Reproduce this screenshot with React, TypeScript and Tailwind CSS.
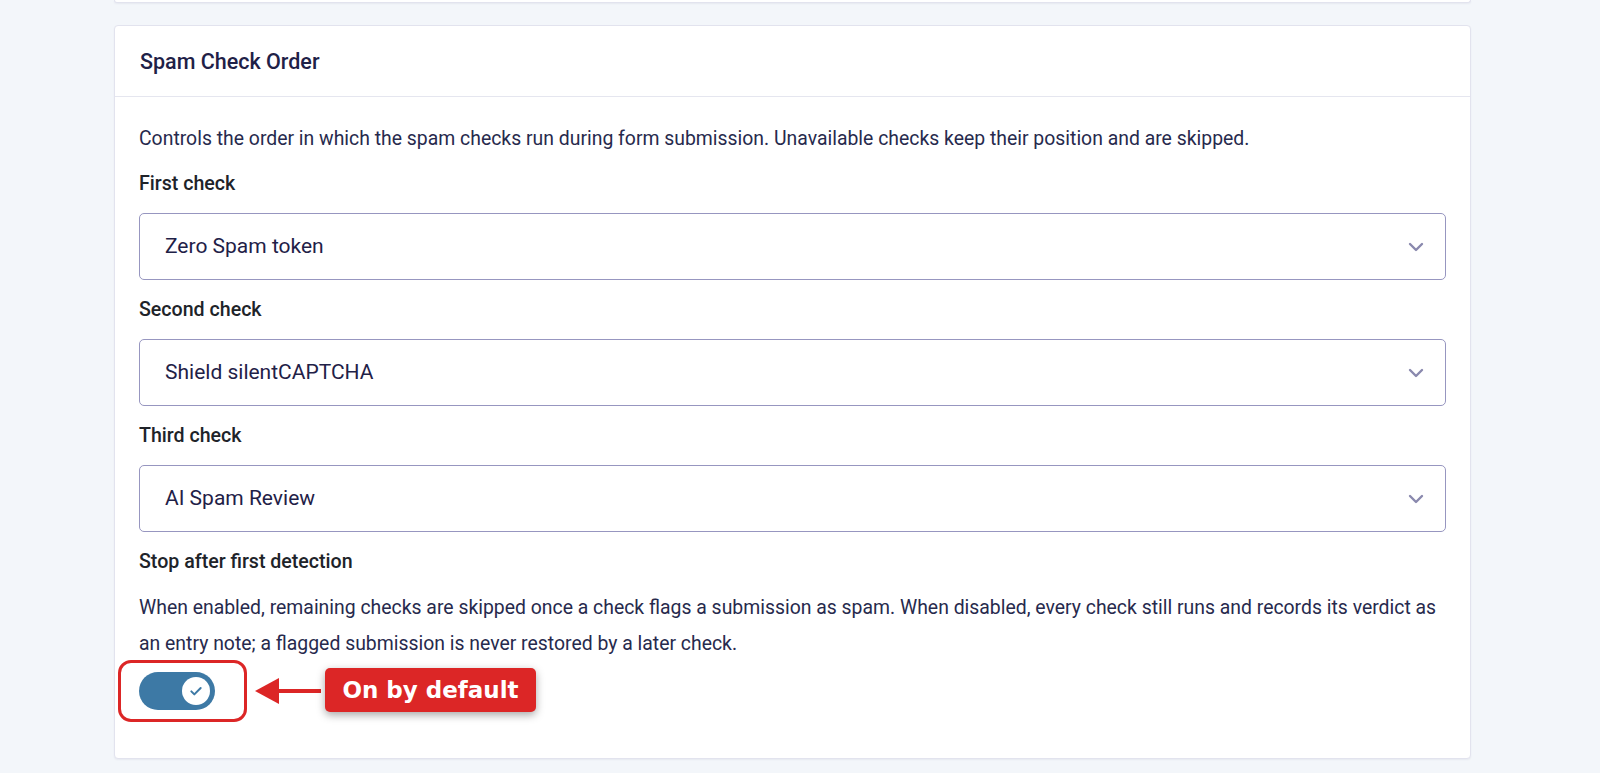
import { ChevronDown } from "lucide-react";

const selects = [
  { label: "First check", value: "Zero Spam token" },
  { label: "Second check", value: "Shield silentCAPTCHA" },
  { label: "Third check", value: "AI Spam Review" },
];

const Select = ({ value }: { value: string }) => {
  return (
    <div className="flex h-[67px] items-center justify-between rounded-[5px] border border-[#9796c0] bg-white pl-[25px] pr-[17px] mb-[18px]">
      <span className="text-[21px] text-[#1f2147]">{value}</span>
      <ChevronDown className="h-[24px] w-[24px] text-[#8a89ae]" strokeWidth={2.4} />
    </div>
  );
};

const App = () => {
  return (
    <div
      className="min-h-screen bg-[#f3f6fa] pb-[15px]"
      style={{ fontFamily: "Roboto, 'Noto Sans', sans-serif" }}
    >
      <div className="ml-[114px] w-[1357px]">
        {/* previous card, scrolled mostly out of view */}
        <div className="h-[3px] rounded-b-[4px] border-x border-b border-[#e2e3ee] bg-white shadow-[0_1px_2px_rgba(40,40,90,0.06)]" />

        <section className="mt-[22px] rounded-[4px] border border-[#e2e3ee] bg-white shadow-[0_1px_2px_rgba(40,40,90,0.06)]">
          <header className="flex h-[71px] items-center border-b border-[#e5e6ef] px-[25px] pt-[3px]">
            <h2 className="text-[21.5px] font-medium text-[#1f2147]">Spam Check Order</h2>
          </header>

          <div className="px-[24px] pt-[24px] pb-[48px]">
            <p className="text-[19.4px] leading-[36px] text-[#272a4d]">
              Controls the order in which the spam checks run during form submission. Unavailable checks keep their position and are skipped.
            </p>

            <div className="mt-[15px]">
              {selects.map((s) => (
                <div key={s.label}>
                  <label className="mb-[17px] block text-[19.6px] font-medium leading-[24px] text-[#202329]">
                    {s.label}
                  </label>
                  <Select value={s.value} />
                </div>
              ))}
            </div>

            <div className="text-[19.6px] font-medium leading-[24px] text-[#202329]">Stop after first detection</div>
            <p className="mt-[16px] text-[19.4px] leading-[36px] text-[#272a4d]">
              When enabled, remaining checks are skipped once a check flags a submission as spam. When disabled, every check still runs and records its verdict as an entry note; a flagged submission is never restored by a later check.
            </p>

            <div className="relative mt-[10px] h-[38px]">
              <button className="flex h-[38px] w-[76px] items-center justify-end rounded-full bg-[#3d79a5] pr-[5px]">
                <span className="flex h-[28px] w-[28px] items-center justify-center rounded-full bg-white">
                  <svg width="16" height="16" viewBox="0 0 24 24" fill="none" stroke="#3d79a5" strokeWidth="3" strokeLinecap="round" strokeLinejoin="round">
                    <path d="M5 12.5l4.5 4.5L19 7.5" />
                  </svg>
                </span>
              </button>

              {/* annotation */}
              <div className="pointer-events-none absolute left-[-21px] top-[-12px] h-[62px] w-[129px] rounded-[13px] border-[3px] border-[#dc2626]" />
              <svg className="absolute left-[116px] top-[4px]" width="66" height="30" viewBox="0 0 66 30">
                <polygon points="0,15 24,2 24,28" fill="#dc2626" />
                <rect x="22" y="13" width="44" height="4" fill="#dc2626" />
              </svg>
              <div
                className="absolute left-[186px] top-[-4px] flex h-[44px] w-[211px] items-center justify-center rounded-[5px] bg-[#dc2626] text-[23px] font-bold text-white shadow-[0_3px_8px_rgba(0,0,0,0.35)]"
                style={{ fontFamily: "'DejaVu Sans', sans-serif" }}
              >
                On by default
              </div>
            </div>
          </div>
        </section>
      </div>
    </div>
  );
};

export default App;
